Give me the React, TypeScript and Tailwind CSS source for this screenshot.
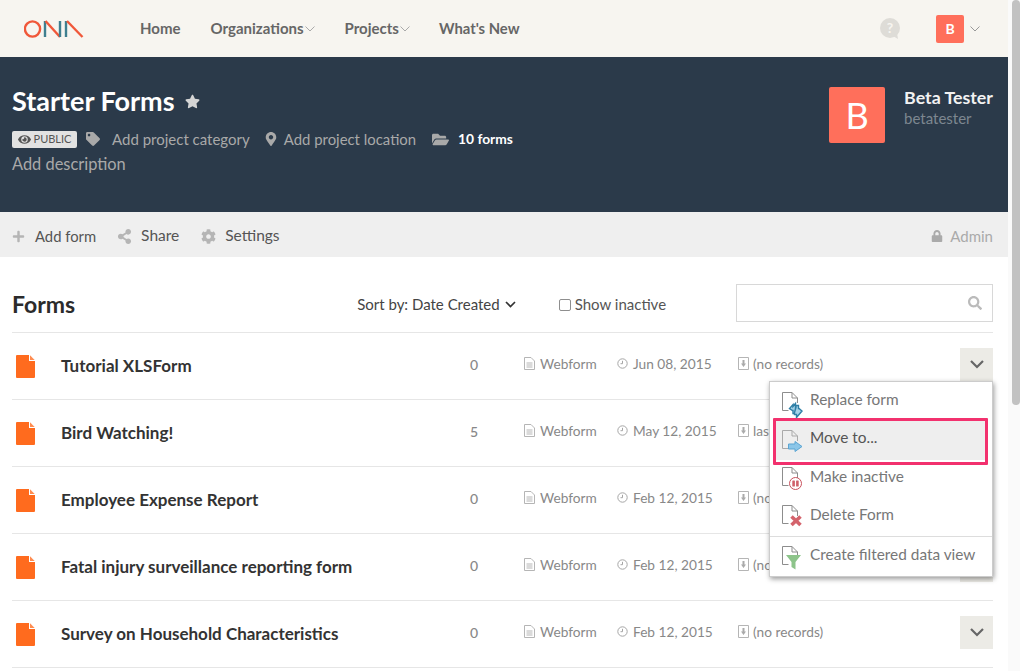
import React from "react";
import { FaPlus, FaShareAlt, FaCog, FaLock, FaTag, FaMapMarkerAlt, FaFolderOpen, FaStar, FaEye, FaSearch } from "react-icons/fa";

const Chevron = ({ c = "#aaa", w = 10 }: { c?: string; w?: number }) => (
  <svg width={w} height={6} viewBox="0 0 10 6" fill="none" stroke={c} strokeWidth="1"><path d="M0.5 0.5 5 5 9.5 0.5" /></svg>
);

const Logo = () => (
  <svg width="60" height="20" viewBox="0 0 60 20" fill="none" strokeWidth="2.4">
    <circle cx="8.5" cy="10" r="7.6" stroke="#f0583a" />
    <path d="M21 18V2" stroke="#3f7f8f" />
    <path d="M21.5 2 36 18" stroke="#f0583a" />
    <path d="M36 18V2" stroke="#3f7f8f" />
    <path d="M42 18V2" stroke="#3f7f8f" />
    <path d="M43 2 58.5 18" stroke="#f0583a" />
  </svg>
);

const FileBase = ({ c = "#8d8d8d" }: { c?: string }) => (
  <path d="M7.5 19.5H1.5V1.5H11L16.5 7V12M11 1.5V7H16.5" fill="none" stroke={c} strokeWidth="1" />
);

const ReplaceIcon = () => (
  <svg width="22" height="28" viewBox="0 0 22 28"><FileBase />
    <path d="M14.5 12.5V22.5L12 22.5V19.5H11.5L8.5 17.5 12 13.5 12 15.5Z" fill="#a5d2e8" stroke="#2f7fa6" strokeWidth="1.4" />
    <path d="M15 16.5V14.5H17.5V17.5H18L21 20 15.5 26.5V23.5H13.5V21.5Z" fill="#a5d2e8" stroke="#2f7fa6" strokeWidth="1.4" /></svg>
);
const MoveIcon = () => (
  <svg width="22" height="28" viewBox="0 0 22 28"><FileBase c="#a9a9a9" />
    <path d="M7.5 15H14V12.5L21 17.5 14 22.5V20H7.5Z" fill="#8cc6e8" stroke="#5ba5d3" strokeWidth="1" /></svg>
);
const PauseIcon = () => (
  <svg width="22" height="28" viewBox="0 0 22 28"><FileBase />
    <circle cx="14.5" cy="17.5" r="6" fill="#fff" stroke="#c9505c" strokeWidth="1" />
    <rect x="11.3" y="14.5" width="2.6" height="6" rx="0.6" fill="#d0606a" /><rect x="15.1" y="14.5" width="2.6" height="6" rx="0.6" fill="#d0606a" /></svg>
);
const DeleteIcon = () => (
  <svg width="22" height="28" viewBox="0 0 22 28"><FileBase />
    <path d="M10.5 12.5 19.5 21M19.5 12.5 10.5 21" fill="none" stroke="#d4636c" strokeWidth="3.6" /></svg>
);
const FilterIcon = () => (
  <svg width="22" height="28" viewBox="0 0 22 28"><FileBase />
    <path d="M5 10H20L14.5 17V24.5L10.5 22V17Z" fill="#8dc48a" /></svg>
);

const OrangeFile = () => (
  <svg width="19" height="23" viewBox="0 0 19 23" className="ml-[4px]"><path d="M1 0H13V6H19V22A1 1 0 0 1 18 23H1A1 1 0 0 1 0 22V1A1 1 0 0 1 1 0Z" fill="#ff6b1e" /><path d="M14 0.3 18.7 5H14Z" fill="#ff8c50" /></svg>
);
const DocIcon = () => (
  <svg width="11" height="13" viewBox="0 0 11 13" fill="none" stroke="#b5b5b5" strokeWidth="1"><path d="M.5.5H7L10.5 4V12.5H.5ZM2.5 6H8.5M2.5 8H8.5M2.5 10H8.5" /></svg>
);
const ClockIcon = () => (
  <svg width="11" height="11" viewBox="0 0 11 11" fill="none" stroke="#a5a5a5" strokeWidth="1"><circle cx="5.5" cy="5.5" r="4.7" /><path d="M5.5 2.8V5.7H3.5" /></svg>
);
const DlIcon = () => (
  <svg width="11" height="13" viewBox="0 0 11 13" fill="none"><path d="M.5.5H10.5V12.5H.5Z" stroke="#b5b5b5" /><path d="M4.5 3H6.5V6.5H8L5.5 10 3 6.5H4.5Z" fill="#aaa" /></svg>
);

const rows = [
  { t: "Tutorial XLSForm", n: "0", d: "Jun 08, 2015", r: "(no records)" },
  { t: "Bird Watching!", n: "5", d: "May 12, 2015", r: "last" },
  { t: "Employee Expense Report", n: "0", d: "Feb 12, 2015", r: "(no records)" },
  { t: "Fatal injury surveillance reporting form", n: "0", d: "Feb 12, 2015", r: "(no" },
  { t: "Survey on Household Characteristics", n: "0", d: "Feb 12, 2015", r: "(no records)" },
];

const MenuItem = ({ icon, label, cls, iconCls }: { icon: React.ReactNode; label: string; cls: string; iconCls: string }) => (
  <div className={`flex items-start text-[15.4px] leading-[20px] text-[#777] ${cls}`}>
    <span className={`block w-[29px] shrink-0 ${iconCls}`}>{icon}</span>
    <span className="whitespace-nowrap">{label}</span>
  </div>
);

export default function App() {
  return (
    <div className="relative flex h-[671px] w-[1020px] overflow-hidden bg-white text-[#777]" style={{ fontFamily: '"Lato", "Liberation Sans", sans-serif' }}>
      <div className="w-[1008px] shrink-0">
        <nav className="flex h-[57px] items-center bg-[#f7f5f0] pl-[24px] text-[15px] font-bold text-[#666]">
          <Logo />
          <a className="ml-[56px]">Home</a>
          <a className="ml-[30px] flex items-center gap-[1px]">Organizations<Chevron /></a>
          <a className="ml-[30px] flex items-center gap-[1px]">Projects<Chevron /></a>
          <a className="ml-[29px] text-[14.8px]">What's New</a>
          <span className="ml-auto mr-[28px] flex items-center">
            <svg width="22" height="22" viewBox="0 0 22 22" className="mr-[34px]"><circle cx="10" cy="10" r="10" fill="#dedcd7" /><path d="M13 18 18 21 17 15Z" fill="#dedcd7" /><text x="10" y="15" textAnchor="middle" fontSize="14" fontWeight="700" fill="#f7f5f0">?</text></svg>
            <span className="flex h-[28px] w-[28px] items-center justify-center rounded-[2px] bg-[#ff6f5b] text-[14px] font-bold text-white">B</span>
            <span className="ml-[6px]"><Chevron c="#999" /></span>
          </span>
        </nav>

        <header className="flex h-[155px] justify-between bg-[#2b3a4a] pl-[12px] pr-[15px]">
          <div>
            <h1 className="mt-[26px] flex items-center text-[27px] leading-[36px] font-bold text-white">
              Starter Forms <FaStar className="ml-[10px] text-[15px] text-[#d5d5d5]" />
            </h1>
            <div className="mt-[10px] flex items-center text-[15px] leading-[20px] text-[#a9a9a9]">
              <span className="flex h-[17px] w-[65px] items-center justify-center gap-[3px] rounded-[2px] bg-[#e2e2e2] text-[11px] text-[#555]"><FaEye className="text-[13px]" />PUBLIC</span>
              <FaTag className="ml-[9px] text-[14px]" /><span className="ml-[12px]">Add project category</span>
              <FaMapMarkerAlt className="ml-[14px] text-[14px]" /><span className="ml-[6px] text-[14.9px]">Add project location</span>
              <FaFolderOpen className="ml-[16px] text-[17px]" /><span className="ml-[9px] text-[13.8px] font-bold text-white">10 forms</span>
            </div>
            <div className="mt-[5px] text-[16.4px] leading-[20px] text-[#a9a9a9]">Add description</div>
          </div>
          <div className="mt-[30px] flex items-start">
            <span className="flex h-[56px] w-[56px] items-center justify-center rounded-[2px] bg-[#ff6f5b] text-[36px] text-white">B</span>
            <div className="ml-[19px]">
              <div className="-mt-px text-[17.8px] leading-[22px] font-bold text-[#f2f2f2]">Beta Tester</div>
              <div className="text-[15px] leading-[20px] text-[#7d8790]">betatester</div>
            </div>
          </div>
        </header>

        <div className="flex h-[45px] items-center bg-[#efefef] pl-[12px] pr-[15px] pt-[3px] text-[15px] text-[#555]">
          <FaPlus className="text-[13px] text-[#b5b5b5]" /><span className="ml-[10px] text-[14.8px]">Add form</span>
          <FaShareAlt className="ml-[21px] text-[15px] text-[#b5b5b5]" /><span className="ml-[9px] text-[15.5px]">Share</span>
          <FaCog className="ml-[22px] text-[15px] text-[#b5b5b5]" /><span className="ml-[9px] text-[15.5px]">Settings</span>
          <span className="ml-auto flex items-center gap-[7px] text-[#aaa]"><FaLock className="text-[12px]" />Admin</span>
        </div>

        <div className="px-[12px] pr-[15px]">
          <div className="flex h-[76px] items-center border-b border-[#e6e6e6] pt-[20px]">
            <h2 className="text-[23px] font-bold text-[#2b2b2b]">Forms</h2>
            <span className="ml-[282px] flex items-center gap-[5px] text-[15px] text-[#444]">Sort by: Date Created
              <svg width="11" height="7" viewBox="0 0 11 7" fill="none" stroke="#333" strokeWidth="1.7"><path d="M1 1 5.5 5.5 10 1" /></svg>
            </span>
            <span className="ml-[43px] flex items-center gap-[4px] text-[15px] text-[#555]">
              <span className="h-[12px] w-[12px] rounded-[2px] border border-[#8e8e8e] bg-white" />Show inactive
            </span>
            <span className="mb-[4px] ml-auto flex h-[38px] w-[257px] items-center justify-end border border-[#d8d8d8] pr-[10px]"><FaSearch className="text-[14px] text-[#bbb]" /></span>
          </div>
          {rows.map((r) => (
            <div key={r.t} className="grid h-[67px] grid-cols-[49px_409px_54px_93px_121px_222px_33px] items-center border-b border-[#e6e6e6] text-[13.7px] text-[#888]">
              <OrangeFile />
              <span className="text-[17px] font-bold text-[#333]">{r.t}</span>
              <span className="pb-[4px] text-[14px] font-medium text-[#888]">{r.n}</span>
              <span className="flex items-center gap-[5px] pb-[4px]"><DocIcon />Webform</span>
              <span className="flex items-center gap-[5px] pb-[4px]"><ClockIcon />{r.d}</span>
              <span className="flex items-center gap-[4px] whitespace-nowrap pb-[4px]"><DlIcon />{r.r}</span>
              <span className="mb-[4px] flex h-[33px] w-[33px] items-center justify-center bg-[#ecebe6]">
                <svg width="14" height="9" viewBox="0 0 14 9" fill="none" stroke="#666" strokeWidth="2.2"><path d="M1 1 7 7 13 1" /></svg>
              </span>
            </div>
          ))}
        </div>
      </div>

      <div className="relative w-[12px] bg-[#fafafa]">
        <div className="ml-[4px] h-[405px] w-[8px] rounded-[4px] bg-[#c2c2c2]" />
      </div>

      {/* dropdown menu lying over the list */}
      <div className="absolute left-[769px] top-[381px] h-[196px] w-[224px] border border-[#ccc] bg-white shadow-[1px_2px_5px_rgba(0,0,0,0.4)]">
        <div className="h-[39px] pl-[11px] pt-[7px]"><MenuItem icon={<ReplaceIcon />} label="Replace form" cls="" iconCls="mt-[2px]" /></div>
        <div className="mx-[4px] h-[39px] bg-[#eee] pl-[7px] pt-[6px]"><MenuItem icon={<MoveIcon />} label="Move to..." cls="!text-[#555]" iconCls="mt-[2px]" /></div>
        <div className="h-[38px] pl-[11px] pt-[6px]"><MenuItem icon={<PauseIcon />} label="Make inactive" cls="" iconCls="" /></div>
        <div className="h-[38px] pl-[11px] pt-[6px]"><MenuItem icon={<DeleteIcon />} label="Delete Form" cls="" iconCls="" /></div>
        <div className="border-t border-[#ddd] pl-[11px] pt-[7px]"><MenuItem icon={<FilterIcon />} label="Create filtered data view" cls="" iconCls="mt-[1px]" /></div>
      </div>
      {/* annotation rectangle */}
      <div className="absolute left-[773px] top-[418px] h-[47px] w-[215px] rounded-[1px] border-[3px] border-[#f2316e]" />
    </div>
  );
}
